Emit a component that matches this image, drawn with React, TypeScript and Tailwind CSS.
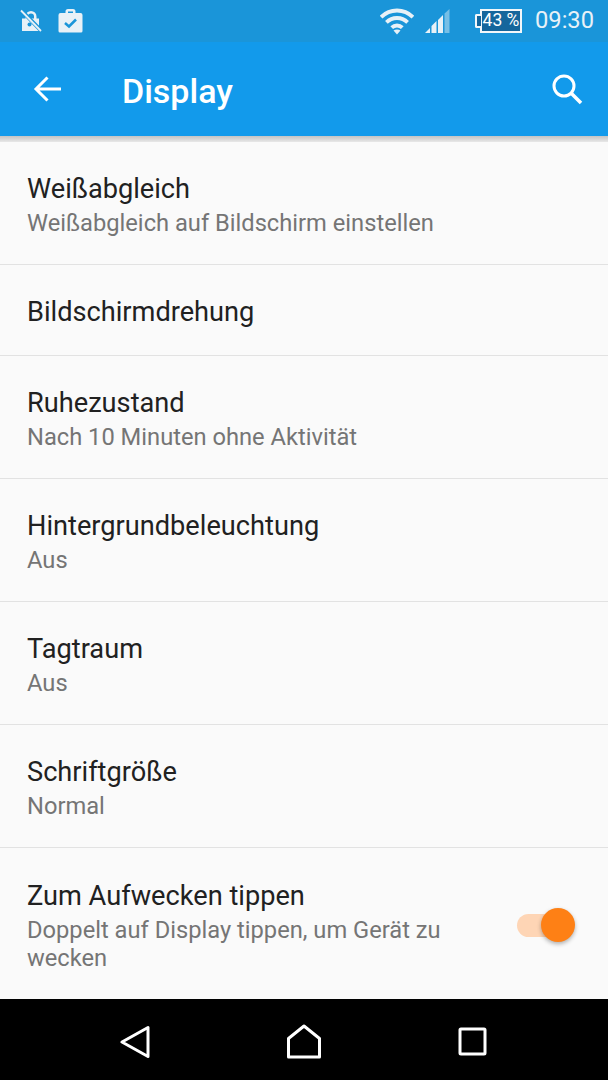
const rows = [
  { title: 'Bildschirmdrehung' },
  { title: 'Ruhezustand', sub: 'Nach 10 Minuten ohne Aktivität' },
  { title: 'Hintergrundbeleuchtung', sub: 'Aus' },
  { title: 'Tagtraum', sub: 'Aus' },
  { title: 'Schriftgröße', sub: 'Normal' },
];

const StatusBar = () => (
  <div className="h-[42px] shrink-0 bg-[#1a95d9] flex items-center pl-[20px] pr-[14px] text-[#e8f1f7]">
    {/* muted lock */}
    <svg width="22" height="24" viewBox="0 0 22 24" className="mr-[16px]">
      <path d="M2 9.500h3.500V7.500a5.500 5.500 0 0 1 11 0v2h2.500v12.500H2z M8 9.500h6V7.500a3 3 0 0 0-6 0z" fill="currentColor" fillRule="evenodd" />
      <circle cx="9.500" cy="15.500" r="2" fill="#1a95d9" />
      <path d="M1 1l20 20.500" stroke="#1a95d9" strokeWidth="4" />
      <path d="M1 1.500l20 20.500" stroke="currentColor" strokeWidth="1.800" />
    </svg>
    {/* work bag */}
    <svg width="25" height="26" viewBox="0 0 25 26">
      <path d="M2.500 5h5V3.500A2.500 2.500 0 0 1 10 1h5a2.500 2.500 0 0 1 2.500 2.500V5h5a2 2 0 0 1 2 2v16a1.500 1.500 0 0 1-1.500 1.500H2A1.500 1.500 0 0 1 .5 23V7a2 2 0 0 1 2-2zM10 5h5V3.500h-5z" fill="currentColor" fillRule="evenodd" />
      <path d="M7 15l4 3.500 7-7" fill="none" stroke="#1a95d9" strokeWidth="2.500" />
    </svg>
    <div className="flex-1" />
    {/* wifi */}
    <svg width="34" height="27" viewBox="0 0 34 27" className="mr-[10px]">
      <path d="M1.100 9.100a22.500 22.500 0 0 1 31.800 0" fill="none" stroke="currentColor" strokeWidth="3.800" />
      <path d="M6.400 14.400a15 15 0 0 1 21.200 0" fill="none" stroke="currentColor" strokeWidth="3.800" />
      <path d="M11.700 19.700a7.500 7.500 0 0 1 10.600 0" fill="none" stroke="currentColor" strokeWidth="3.800" />
      <path d="M13.500 22.500c2-1.500 5-1.500 7 0L17 26.500z" fill="currentColor" />
    </svg>
    {/* signal */}
    <svg width="26" height="26" viewBox="0 0 26 26" className="mr-[30px]">
      <path d="M1 25l5-5v5z" fill="currentColor" />
      <path d="M7.500 25v-7l5-5v12z" fill="currentColor" />
      <path d="M14 25V12l5-5v18z" fill="currentColor" />
      <path d="M20.500 25V5.500L25.500 1v24z" fill="currentColor" opacity="0.45" />
    </svg>
    {/* battery */}
    <div className="relative mr-[13px] flex h-[24px] w-[42px] items-center justify-center border-2 border-[#f2f7fa] bg-[#15669c] text-[17.500px] leading-none text-white">
      <span className="absolute left-[-7px] top-[3px] h-[14px] w-[6px] rounded-l-[2px] border-2 border-r-0 border-[#f2f7fa] bg-[#15669c]" />
      43 %
    </div>
    <span className="text-[23.700px] leading-none">09:30</span>
  </div>
);

const Toolbar = () => (
  <div className="h-[94px] shrink-0 bg-[#129aeb] flex items-center text-white">
    <svg width="30" height="28" viewBox="0 0 30 28" className="ml-[33px]">
      <path d="M28 14H3M14.500 2.500L3 14l11.500 11.500" fill="none" stroke="white" strokeWidth="3" />
    </svg>
    <span className="ml-[59px] mt-[4px] text-[34px] font-medium leading-none">Display</span>
    <div className="flex-1" />
    <svg width="32" height="32" viewBox="0 0 32 32" className="mr-[25px]">
      <circle cx="13" cy="13" r="10" fill="none" stroke="white" strokeWidth="3" />
      <path d="M20.500 20.500L30 30" stroke="white" strokeWidth="3.500" />
    </svg>
  </div>
);

const Label = ({ title, sub }: { title: string; sub?: string }) => (
  <>
    <div className="text-[27.200px] leading-[34px] text-[#212121]">{title}</div>
    {sub && <div className="mt-[3px] text-[23.700px] leading-[28px] text-[#757575]">{sub}</div>}
  </>
);

const App = () => {
  return (
    <div className="w-[608px] h-[1080px] flex flex-col overflow-hidden bg-[#fafafa] [font-family:Roboto,sans-serif]">
      <StatusBar />
      <Toolbar />
      <div className="h-[6px] shrink-0 bg-gradient-to-b from-[#c4c4c4] to-[#e8e8e8]" />
      <div className="h-[123px] shrink-0 flex flex-col justify-center border-b border-[#e2e2e2] px-[27px] pt-[2px]">
        <Label title="Weißabgleich" sub="Weißabgleich auf Bildschirm einstellen" />
      </div>
      {rows.map((r) => (
        <div key={r.title} className={`flex shrink-0 flex-col justify-center border-b border-[#e2e2e2] px-[27px] ${r.sub ? 'h-[123px] pt-[2px]' : 'h-[91px] pt-[4px]'}`}>
          <Label title={r.title} sub={r.sub} />
        </div>
      ))}
      <div className="flex flex-1 items-center pl-[27px] pr-[43px] pt-[3px]">
        <div className="w-[430px]">
          <Label title="Zum Aufwecken tippen" sub="Doppelt auf Display tippen, um Gerät zu wecken" />
        </div>
        <div className="flex-1" />
        <div className="relative h-[23px] w-[48px] rounded-full bg-[#fed5b5]">
          <span className="absolute right-[-10px] top-[-5.500px] h-[34px] w-[34px] rounded-full bg-[#fe8015] shadow-[0_2px_4px_rgba(0,0,0,0.3)]" />
        </div>
      </div>
      <div className="h-[81px] shrink-0 bg-black flex items-center">
        <svg width="30" height="34" viewBox="0 0 30 34" className="ml-[120px] mt-[5px]">
          <path d="M28 2.500v29L2 17z" fill="none" stroke="white" strokeWidth="3" strokeLinejoin="round" />
        </svg>
        <svg width="36" height="36" viewBox="0 0 36 36" className="ml-[136px] mt-[5px]">
          <path d="M2.500 33V14.500L18 2l15.500 12.500V33z" fill="none" stroke="white" strokeWidth="3" strokeLinejoin="round" />
        </svg>
        <svg width="30" height="30" viewBox="0 0 30 30" className="ml-[136px] mt-[5px]">
          <rect x="2" y="2" width="25" height="25" fill="none" stroke="white" strokeWidth="3" rx="1" />
        </svg>
      </div>
    </div>
  );
};

export default App;
